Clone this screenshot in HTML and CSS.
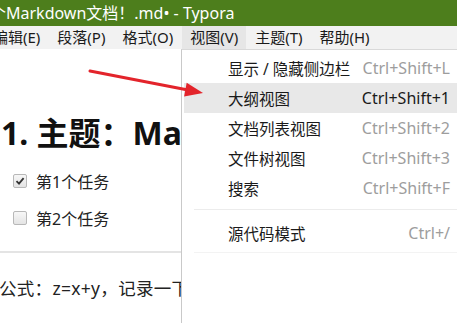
FILE: index.html
```html
<!DOCTYPE html>
<html lang="zh">
<head>
<meta charset="utf-8">
<link rel="stylesheet" href="styles.css">
</head>
<body>
<div class="window">
  <div class="titlebar"><span class="title">个Markdown文档！.md• - Typora</span></div>
  <div class="menubar">
    <span class="mitem first">编辑(E)</span>
    <span class="mitem">段落(P)</span>
    <span class="mitem">格式(O)</span>
    <span class="mitem active">视图(V)</span>
    <span class="mitem">主题(T)</span>
    <span class="mitem">帮助(H)</span>
  </div>
  <div class="body">
    <div class="doc">
      <h1 class="heading">1. 主题：Markdown文档</h1>
      <ul class="tasks">
        <li class="task"><span class="box checked"><svg viewBox="0 0 12 12" width="12" height="12"><path d="M2.5 6.2 L5 8.6 L9.6 3.2" fill="none" stroke="#333" stroke-width="1.8"/></svg></span>第1个任务</li>
        <li class="task"><span class="box"></span>第2个任务</li>
      </ul>
      <div class="rule"></div>
      <p class="formula">公式：z=x+y，记录一下</p>
    </div>
    <div class="dropdown">
      <div class="row"><span class="label">显示 / 隐藏侧边栏</span><span class="key">Ctrl+Shift+L</span></div>
      <div class="row hl"><span class="label">大纲视图</span><span class="key">Ctrl+Shift+1</span></div>
      <div class="row"><span class="label">文档列表视图</span><span class="key">Ctrl+Shift+2</span></div>
      <div class="row"><span class="label">文件树视图</span><span class="key">Ctrl+Shift+3</span></div>
      <div class="row"><span class="label">搜索</span><span class="key">Ctrl+Shift+F</span></div>
      <div class="sep"></div>
      <div class="row"><span class="label">源代码模式</span><span class="key">Ctrl+/</span></div>
      <div class="sep faint"></div>
    </div>
    <svg class="arrow" width="457" height="120" viewBox="0 0 457 120">
      <line x1="90" y1="22" x2="188" y2="41" stroke="#e3242b" stroke-width="3" stroke-linecap="round"/>
      <polygon points="203,44 186.7,33.7 184.1,47.5" fill="#e3242b"/>
    </svg>
  </div>
</div>
</body>
</html>
```
FILE: styles.css
```css
* { box-sizing: border-box; }
html, body { margin: 0; padding: 0; }
body {
  width: 457px;
  height: 323px;
  overflow: hidden;
  background: #fff;
  font-family: "Noto Sans", "Noto Sans CJK SC", sans-serif;
  color: #1a1a1a;
}
.window { width: 457px; height: 323px; display: flex; flex-direction: column; }
.titlebar {
  height: 26px;
  background: #4d7e1c;
  color: #fff;
  font-size: 16px;
  line-height: 26px;
  white-space: nowrap;
  overflow: hidden;
}
.title { display: inline-block; margin-left: -10px; }
.menubar {
  height: 23px;
  background: #f2f2f2;
  display: flex;
  align-items: stretch;
  font-size: 15px;
  line-height: 23px;
  white-space: nowrap;
  overflow: hidden;
  color: #1a1a1a;
}
.mitem { padding: 0 8px; margin-right: 1px; }
.mitem.first { margin-left: -15px; }
.mitem.active { background: #e6e6e6; }
.body { position: relative; flex: 1; overflow: hidden; }
.doc { padding-top: 64px; }
.heading {
  margin: 0 0 0 1px;
  font-size: 32px;
  line-height: 40px;
  font-weight: 700;
  white-space: nowrap;
  color: #111;
}
.tasks { list-style: none; margin: 9px 0 0 0; padding: 0 0 0 13px; }
.task {
  display: flex;
  align-items: center;
  gap: 9px;
  height: 37px;
  font-size: 16px;
  color: #222;
}
.box {
  width: 14px; height: 14px;
  border: 1px solid #b8b8b8;
  border-radius: 2px;
  background: linear-gradient(#f7f7f7, #e4e4e4);
  display: flex; align-items: center; justify-content: center;
}
.box svg { display: block; }
.rule { margin-top: 15px; height: 2px; background: #e4e4e4; width: 181px; }
.formula {
  margin: 24px 0 0 -1px;
  font-size: 17.5px;
  line-height: 22px;
  letter-spacing: 0.3px;
  white-space: nowrap;
  color: #222;
}
.dropdown {
  position: absolute;
  left: 181px;
  top: 0;
  width: 290px;
  height: 300px;
  background: #fff;
  border-left: 1px solid #c9c9c9;
  border-top: 1px solid #d9d9d9;
  padding: 3px 0 0 2px;
  font-size: 15.5px;
}
.row {
  height: 30px;
  display: flex;
  align-items: center;
  justify-content: space-between;
  padding: 0 21px 0 44px;
  color: #1a1a1a;
}
.key { color: #9d9d9d; font-size: 16px; }
.row.hl { background: #e8e8e8; }
.row.hl .key { color: #1a1a1a; }
.sep { height: 1px; background: #ececec; margin: 6px 0 8px 10px; }
.sep.faint { margin-top: 4px; background: #f3f3f3; }
.arrow { position: absolute; left: 0; top: 50px; transform: translateY(-50px); }
```
